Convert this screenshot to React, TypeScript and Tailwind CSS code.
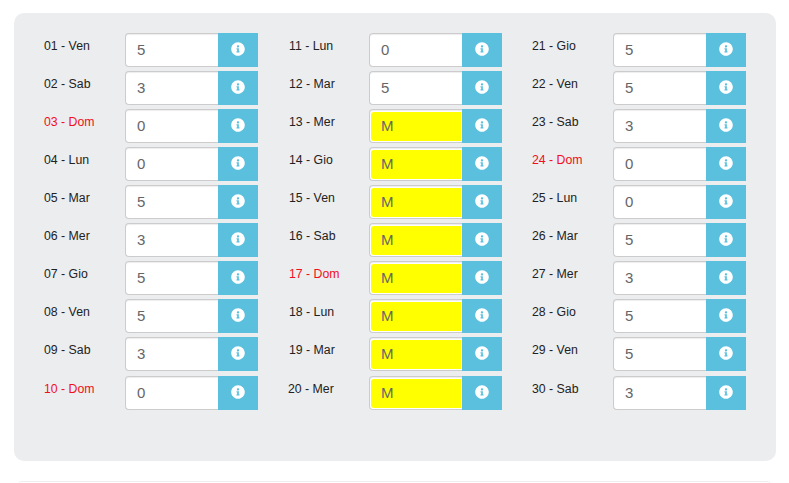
import { FaInfoCircle } from "react-icons/fa";

type Day = { label: string; value: string; sunday?: boolean };

const columns: Day[][] = [
  [
    { label: "01 - Ven", value: "5" },
    { label: "02 - Sab", value: "3" },
    { label: "03 - Dom", value: "0", sunday: true },
    { label: "04 - Lun", value: "0" },
    { label: "05 - Mar", value: "5" },
    { label: "06 - Mer", value: "3" },
    { label: "07 - Gio", value: "5" },
    { label: "08 - Ven", value: "5" },
    { label: "09 - Sab", value: "3" },
    { label: "10 - Dom", value: "0", sunday: true },
  ],
  [
    { label: "11 - Lun", value: "0" },
    { label: "12 - Mar", value: "5" },
    { label: "13 - Mer", value: "M" },
    { label: "14 - Gio", value: "M" },
    { label: "15 - Ven", value: "M" },
    { label: "16 - Sab", value: "M" },
    { label: "17 - Dom", value: "M", sunday: true },
    { label: "18 - Lun", value: "M" },
    { label: "19 - Mar", value: "M" },
    { label: "20 - Mer", value: "M" },
  ],
  [
    { label: "21 - Gio", value: "5" },
    { label: "22 - Ven", value: "5" },
    { label: "23 - Sab", value: "3" },
    { label: "24 - Dom", value: "0", sunday: true },
    { label: "25 - Lun", value: "0" },
    { label: "26 - Mar", value: "5" },
    { label: "27 - Mer", value: "3" },
    { label: "28 - Gio", value: "5" },
    { label: "29 - Ven", value: "5" },
    { label: "30 - Sab", value: "3" },
  ],
];

const DayRow = ({ day, shifted }: { day: Day; shifted: boolean }) => {
  const isMalattia = day.value === "M";
  return (
    <div className="flex h-[34px] items-start last:mt-px">
      <div
        className={`w-[81px] shrink-0 pt-[5px] text-[12.3px] leading-4 ${shifted ? "pl-px" : ""} ${
          day.sunday ? "text-[#f01020]" : "text-[#222222]"
        }`}
      >
        {day.label}
      </div>
      <div
        className={`h-[34px] w-[93px] rounded-l-[4px] border border-r-0 border-[#cccccc] bg-white shadow-[inset_0_1px_1px_rgba(0,0,0,0.075)] ${
          isMalattia ? "pb-px pl-px pr-px pt-[2px]" : ""
        }`}
      >
        <div
          className={`flex h-full items-center rounded-l-[3px] text-[15px] text-[#666666] ${
            isMalattia ? "bg-[#ffff00] pl-[10px]" : "pl-[11px]"
          }`}
        >
          {day.value}
        </div>
      </div>
      <div className="flex h-[34px] w-10 items-center justify-center bg-[#5bc0de] pb-[2px] text-white">
        <FaInfoCircle size={14} />
      </div>
    </div>
  );
};

export default function App() {
  return (
    <div className="h-[483px] overflow-hidden bg-white font-['Liberation_Sans',Arial,sans-serif]">
      <div className="ml-[14px] mr-[13px] mt-[13px] h-[448px] rounded-[10px] bg-[#ecedef] pl-[30px] pt-5">
        <div className="grid grid-cols-[244px_244px_244px]">
          {columns.map((col, c) => (
            <div key={col[0].label} className="flex flex-col gap-1">
              {col.map((day, i) => (
                <DayRow key={day.label} day={day} shifted={c === 1 && i < 9} />
              ))}
            </div>
          ))}
        </div>
      </div>
      <div className="mx-[18px] mt-5 h-5 rounded-t-[4px] border-t border-[#eeeeee]" />
    </div>
  );
}
